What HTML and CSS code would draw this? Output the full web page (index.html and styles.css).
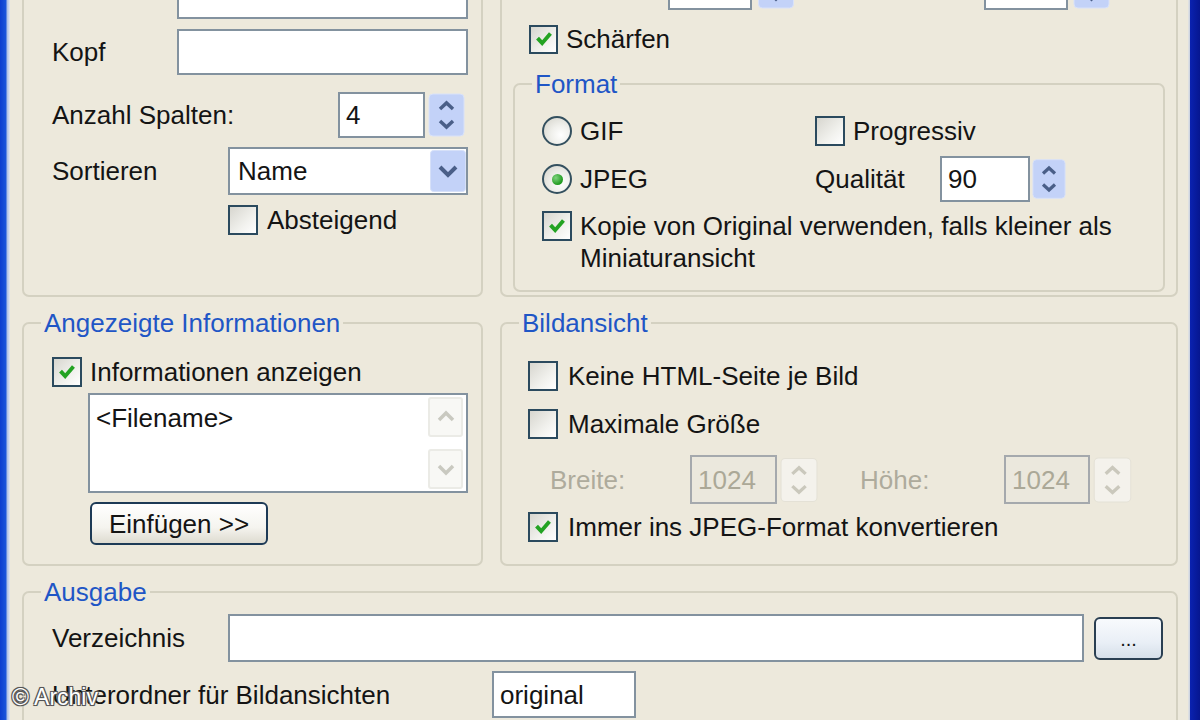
FILE: index.html
```html
<!DOCTYPE html>
<html lang="de">
<head>
<meta charset="utf-8">
<title>Web-Galerie</title>
<link rel="stylesheet" href="styles.css">
</head>
<body>
<div class="window">
  <div class="frame-left"></div>
  <div class="client">
    <div class="grid">

      <!-- Layout -->
      <fieldset class="group">
        <legend>Layout</legend>
        <div class="pane pane-layout">
          <div class="row r-title"><span class="lbl w125 top">Titel</span><div class="field grow"></div></div>
          <div class="row r-kopf"><span class="lbl w125">Kopf</span><div class="field grow"></div></div>
          <div class="row r-cols">
            <span class="lbl grow">Anzahl Spalten:</span>
            <div class="field f-87">4</div>
            <svg class="spin" viewBox="0 0 37 44" width="37" height="44"><rect x="1" y="1" width="35" height="42" rx="4" fill="#c3d2f8" stroke="#d9e2f9"/><path d="M12 16 L18.5 10 L25 16" stroke="#4a5f88" stroke-width="3.5" fill="none"/><path d="M12 28 L18.5 34 L25 28" stroke="#4a5f88" stroke-width="3.5" fill="none"/></svg>
          </div>
          <div class="row r-sort">
            <span class="lbl w176">Sortieren</span>
            <div class="combo"><span>Name</span>
              <svg class="drop" viewBox="0 0 36 42" width="36" height="42"><rect x="0.5" y="0.5" width="35" height="41" rx="3" fill="#c3d2f8" stroke="#d6e0f8"/><path d="M10 17 L18 25 L26 17" stroke="#4a5f88" stroke-width="4" fill="none"/></svg>
            </div>
          </div>
          <div class="row r-desc">
            <label class="chk"><span class="box"></span><span>Absteigend</span></label>
          </div>
        </div>
      </fieldset>

      <!-- Miniaturansichten -->
      <fieldset class="group">
        <legend>Miniaturansichten</legend>
        <div class="pane pane-thumb">
          <div class="row r-size">
            <span class="lbl w138 top">Breite:</span>
            <div class="field f-84 faint">120</div>
            <svg class="spin sp-top" viewBox="0 0 37 44" width="38" height="44"><rect x="1" y="1" width="35" height="42" rx="4" fill="#c3d2f8" stroke="#d9e2f9"/><path d="M12 16 L18.5 10 L25 16" stroke="#4a5f88" stroke-width="3.5" fill="none"/><path d="M12 28 L18.5 34 L25 28" stroke="#4a5f88" stroke-width="3.5" fill="none"/></svg>
            <span class="lbl w141 ml48 top">Höhe:</span>
            <div class="field f-84 faint">120</div>
            <svg class="spin sp-top" viewBox="0 0 37 44" width="37" height="44"><rect x="1" y="1" width="35" height="42" rx="4" fill="#c3d2f8" stroke="#d9e2f9"/><path d="M12 16 L18.5 10 L25 16" stroke="#4a5f88" stroke-width="3.5" fill="none"/><path d="M12 28 L18.5 34 L25 28" stroke="#4a5f88" stroke-width="3.5" fill="none"/></svg>
          </div>
          <div class="row r-sharp">
            <label class="chk"><span class="box"><svg viewBox="0 0 26 26" width="24" height="24"><path d="M6 12 L11 17.5 L20 7" stroke="#23a323" stroke-width="4.2" fill="none"/></svg></span><span>Schärfen</span></label>
          </div>
          <fieldset class="group g-format">
            <legend>Format</legend>
            <div class="pane pane-format">
              <div class="fmt-grid">
                <label class="chk"><span class="radio"></span><span>GIF</span></label>
                <label class="chk"><span class="box"></span><span>Progressiv</span></label>
                <label class="chk"><span class="radio on"><span class="dot"></span></span><span>JPEG</span></label>
                <div class="row r-qual">
                  <span class="lbl w125">Qualität</span>
                  <div class="field f-90">90</div>
                  <svg class="spin sp-q" viewBox="0 0 37 44" width="34" height="44"><rect x="1" y="1" width="35" height="42" rx="4" fill="#c3d2f8" stroke="#d9e2f9"/><path d="M12 16 L18.5 10 L25 16" stroke="#4a5f88" stroke-width="3.5" fill="none"/><path d="M12 28 L18.5 34 L25 28" stroke="#4a5f88" stroke-width="3.5" fill="none"/></svg>
                </div>
              </div>
              <label class="chk multi"><span class="box"><svg viewBox="0 0 26 26" width="24" height="24"><path d="M6 12 L11 17.5 L20 7" stroke="#23a323" stroke-width="4.2" fill="none"/></svg></span><span class="wrap">Kopie von Original verwenden, falls kleiner als Miniaturansicht</span></label>
            </div>
          </fieldset>
        </div>
      </fieldset>

      <!-- Angezeigte Informationen -->
      <fieldset class="group">
        <legend>Angezeigte Informationen</legend>
        <div class="pane pane-info">
          <label class="chk"><span class="box"><svg viewBox="0 0 26 26" width="24" height="24"><path d="M6 12 L11 17.5 L20 7" stroke="#23a323" stroke-width="4.2" fill="none"/></svg></span><span>Informationen anzeigen</span></label>
          <div class="textarea">
            <div class="ta-text">&lt;Filename&gt;</div>
            <div class="scrollbar">
              <div class="sb-btn"><svg viewBox="0 0 30 36" width="30" height="36"><path d="M8 21 L15 14 L22 21" stroke="#c9c9c0" stroke-width="3.5" fill="none"/></svg></div>
              <div class="sb-btn"><svg viewBox="0 0 30 36" width="30" height="36"><path d="M8 15 L15 22 L22 15" stroke="#c9c9c0" stroke-width="3.5" fill="none"/></svg></div>
            </div>
          </div>
          <button class="btn btn-insert" type="button">Einfügen &gt;&gt;</button>
        </div>
      </fieldset>

      <!-- Bildansicht -->
      <fieldset class="group">
        <legend>Bildansicht</legend>
        <div class="pane pane-view">
          <label class="chk"><span class="box"></span><span>Keine HTML-Seite je Bild</span></label>
          <label class="chk r-max"><span class="box"></span><span>Maximale Größe</span></label>
          <div class="row r-dims">
            <span class="lbl w140 dis">Breite:</span>
            <div class="field f-87 disabled">1024</div>
            <svg class="spin dspin" viewBox="0 0 37 44" width="38" height="46"><rect x="1" y="1" width="35" height="42" rx="4" fill="#f4f2ec" stroke="#e4e1d6"/><path d="M12 16 L18.5 10 L25 16" stroke="#cac8bc" stroke-width="3.2" fill="none"/><path d="M12 28 L18.5 34 L25 28" stroke="#cac8bc" stroke-width="3.2" fill="none"/></svg>
            <span class="lbl w144 ml42 dis">Höhe:</span>
            <div class="field f-86 disabled">1024</div>
            <svg class="spin dspin" viewBox="0 0 37 44" width="39" height="46"><rect x="1" y="1" width="35" height="42" rx="4" fill="#f4f2ec" stroke="#e4e1d6"/><path d="M12 16 L18.5 10 L25 16" stroke="#cac8bc" stroke-width="3.2" fill="none"/><path d="M12 28 L18.5 34 L25 28" stroke="#cac8bc" stroke-width="3.2" fill="none"/></svg>
          </div>
          <label class="chk r-jpeg"><span class="box"><svg viewBox="0 0 26 26" width="24" height="24"><path d="M6 12 L11 17.5 L20 7" stroke="#23a323" stroke-width="4.2" fill="none"/></svg></span><span>Immer ins JPEG-Format konvertieren</span></label>
        </div>
      </fieldset>

      <!-- Ausgabe -->
      <fieldset class="group g-out">
        <legend>Ausgabe</legend>
        <div class="pane pane-out">
          <div class="row r-dir">
            <span class="lbl w176">Verzeichnis</span>
            <div class="field grow"></div>
            <button class="btn btn-browse" type="button">...</button>
          </div>
          <div class="row r-sub">
            <span class="lbl w440">Unterordner für Bildansichten</span>
            <div class="field f-144">original</div>
          </div>
        </div>
      </fieldset>

    </div>
  </div>
  <div class="frame-right"></div>
  <div class="watermark">© Archiv</div>
</div>
</body>
</html>
```
FILE: styles.css
```css
* { box-sizing: border-box; }
html, body { margin: 0; padding: 0; }
body {
  width: 1200px;
  height: 720px;
  overflow: hidden;
  background: #ede9dc;
  font: 26px/30px "Liberation Sans", Arial, sans-serif;
  color: #141414;
}
.window { display: flex; height: 720px; position: relative; }
.frame-left {
  width: 10px; flex: none;
  background: linear-gradient(to right, #0b3dcf 0, #1a55dc 6px, #a9bde6 7px, #e4e8ee 10px);
}
.frame-right {
  width: 12px; flex: none;
  background: linear-gradient(to right, #e6e6e4 0, #c6cede 2px, #0a22b0 2px, #061690 12px);
}
.client { flex: 1; padding: 0 10px 0 12px; overflow: hidden; }
.grid {
  display: grid;
  grid-template-columns: 461px 678px;
  grid-template-rows: 397px 258px 160px;
  column-gap: 17px;
  row-gap: 11px;
  margin-top: -100px;
}
.group {
  margin: 0; padding: 0;
  border: 2px solid #d4d1c1;
  border-radius: 7px;
  min-width: 0;
}
.group > legend {
  margin-left: 17px;
  padding: 0 3px;
  color: #1f56c6;
  line-height: 30px;
}
.g-out { grid-column: 1 / 3; }

.row { display: flex; align-items: center; }
.lbl { flex: none; white-space: nowrap; }
.lbl.top { align-self: flex-start; margin-top: -6px; }
.grow { flex: 1; }
.w125 { width: 125px; }
.w138 { width: 138px; }
.w140 { width: 140px; }
.w141 { width: 141px; }
.w144 { width: 144px; }
.w176 { width: 176px; }
.w440 { width: 440px; }
.ml48 { margin-left: 48px; }
.ml42 { margin-left: 42px; }
.dis { color: #aeab9c; }

.field {
  height: 100%;
  background: #fff;
  border: 2px solid #83929f;
  padding: 0 6px;
  display: flex; align-items: center;
  flex: none;
}
.field.grow { flex: 1; }
.f-84 { width: 84px; }
.f-86 { width: 86px; }
.f-87 { width: 87px; }
.f-90 { width: 90px; }
.f-144 { width: 144px; }
.faint { color: #c8c8c8; }
.field.disabled { background: #ebe8dd; border-color: #a5a9ad; color: #aba897; }

.spin { flex: none; margin-left: 3px; display: block; }
.sp-top { margin-left: 5px; }
.sp-q { margin-left: 2px; }

.combo {
  width: 240px; height: 48px;
  background: #fff;
  border: 2px solid #83929f;
  display: flex; align-items: center;
  padding-left: 8px;
}
.combo .drop { margin-left: auto; margin-right: 0; display: block; }

/* checkboxes & radios */
.chk { display: flex; align-items: center; gap: 8px; white-space: nowrap; }
.box {
  width: 30px; height: 30px; flex: none;
  border: 2px solid #2b4a5e;
  background: linear-gradient(135deg, #d7d6cf 0%, #f1f1ed 60%, #fff 100%);
  display: flex; align-items: center; justify-content: center;
}
.radio {
  width: 30px; height: 30px; flex: none;
  border: 2px solid #34505f;
  border-radius: 50%;
  background: radial-gradient(circle at 65% 65%, #fff 0, #f0f0ec 40%, #d2d1c8 100%);
  display: flex; align-items: center; justify-content: center;
}
.radio .dot {
  width: 11px; height: 11px; border-radius: 50%;
  background: radial-gradient(circle at 35% 35%, #7fd37f, #1f9a1f 70%);
}
.chk.multi { align-items: flex-start; white-space: normal; }
.chk.multi .box { margin-top: 1px; }
.chk .wrap { width: 545px; line-height: 32px; }

/* Layout pane */
.pane-layout { padding: 43px 13px 0 28px; }
.r-title { height: 46px; }
.r-kopf { margin-top: 10px; height: 46px; }
.r-cols { margin-top: 17px; height: 46px; padding-right: 3px; }
.r-sort { margin-top: 9px; height: 48px; }
.r-desc { margin-top: 10px; padding-left: 176px; }
.r-desc .chk { gap: 9px; }

/* Thumbnails pane */
.pane-thumb { padding: 34px 0 0 0; }
.r-size { height: 46px; padding-left: 28px; }
.r-sharp { margin-top: 14px; padding-left: 27px; }
.r-sharp .box { width: 29px; height: 29px; }
.g-format { margin: 15px 11px 0 11px; height: 223px; }
.pane-format { padding: 17px 0 0 27px; }
.fmt-grid {
  display: grid;
  grid-template-columns: 273px 1fr;
  grid-template-rows: 30px 46px;
  row-gap: 10px;
  align-items: center;
}
.r-qual { height: 46px; }
.pane-format .chk.multi { margin-top: 8px; }

/* Info pane */
.pane-info { padding: 19px 13px 0 28px; }
.textarea {
  margin: 6px 0 0 36px;
  width: 380px; height: 100px;
  border: 2px solid #83929f;
  background: #fff;
  display: flex;
}
.ta-text { flex: 1; padding: 8px 6px; }
.scrollbar {
  width: 35px; margin-right: 3px;
  display: flex; flex-direction: column; justify-content: space-between;
  padding: 2px 0;
}
.sb-btn {
  height: 40px;
  border: 2px solid #ebebe6;
  border-radius: 3px;
  background: #f8f8f5;
  display: flex; align-items: center; justify-content: center;
}
.btn {
  font: inherit; color: #141414;
  border: 2px solid #1d3a56;
  border-radius: 6px;
  padding: 0;
  background: linear-gradient(#ffffff 0%, #f5f4ef 60%, #dedbd0 100%);
}
.btn-insert { display: block; margin: 9px 0 0 38px; width: 178px; height: 43px; }

/* View pane */
.pane-view { padding: 23px 0 0 26px; }
.pane-view .chk { gap: 10px; }
.r-max { margin-top: 18px; }
.r-dims { margin-top: 16px; height: 49px; padding-left: 22px; }
.r-jpeg { margin-top: 8px; }

/* Output pane */
.pane-out { padding: 7px 13px 0 28px; }
.r-dir { height: 48px; }
.btn-browse {
  margin-left: 10px; width: 69px; height: 43px;
  font-size: 20px; line-height: 20px; padding-top: 2px;
  background: linear-gradient(#f8fafd 0%, #e9eff6 60%, #d6dfe9 100%);
  border-color: #2a3f52;
}
.r-sub { margin-top: 9px; height: 47px; }

.watermark {
  position: absolute;
  left: 12px; top: 683px;
  font-size: 23px; line-height: 28px;
  color: #fff;
  text-shadow: -1px -1px 0 #555, 1px -1px 0 #555, -1px 1px 0 #555, 1px 1px 0 #555, 0 0 2px #333;
}
```
